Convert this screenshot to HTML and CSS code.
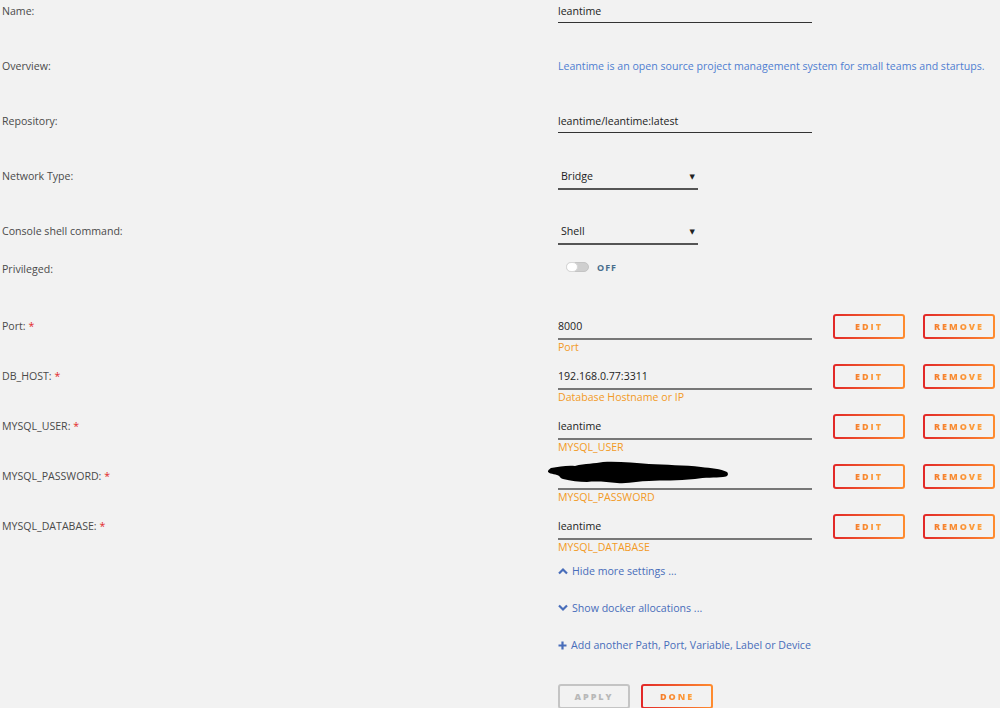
FILE: index.html
```html
<!DOCTYPE html>
<html lang="en">
<head>
    <meta charset="UTF-8">
    <meta name="viewport" content="width=device-width, initial-scale=1.0">
    <title>Update Container</title>
    <link rel="stylesheet" href="styles.css">
</head>
<body>
    <div class="form">
        <div class="row">
            <div class="label">Name:</div>
            <div class="value"><input class="text-input" type="text" value="leantime"></div>
        </div>
        <div class="row">
            <div class="label">Overview:</div>
            <div class="value overview">Leantime is an open source project management system for small teams and startups.</div>
        </div>
        <div class="row">
            <div class="label">Repository:</div>
            <div class="value"><input class="text-input" type="text" value="leantime/leantime:latest"></div>
        </div>
        <div class="row">
            <div class="label">Network Type:</div>
            <div class="value">
                <div class="select"><span>Bridge</span><span class="caret">&#9660;</span></div>
            </div>
        </div>
        <div class="row short">
            <div class="label">Console shell command:</div>
            <div class="value">
                <div class="select"><span>Shell</span><span class="caret">&#9660;</span></div>
            </div>
        </div>
        <div class="row tall">
            <div class="label">Privileged:</div>
            <div class="value switch-row">
                <span class="switch"><span class="knob"></span></span>
                <span class="switch-text">OFF</span>
            </div>
        </div>

        <div class="row config">
            <div class="label">Port: <span class="req">*</span></div>
            <div class="value config-value">
                <div class="config-field">
                    <input class="text-input config-input" type="text" value="8000">
                    <div class="desc">Port</div>
                </div>
                <button class="btn"><span>EDIT</span></button>
                <button class="btn"><span>REMOVE</span></button>
            </div>
        </div>
        <div class="row config">
            <div class="label">DB_HOST: <span class="req">*</span></div>
            <div class="value config-value">
                <div class="config-field">
                    <input class="text-input config-input" type="text" value="192.168.0.77:3311">
                    <div class="desc">Database Hostname or IP</div>
                </div>
                <button class="btn"><span>EDIT</span></button>
                <button class="btn"><span>REMOVE</span></button>
            </div>
        </div>
        <div class="row config">
            <div class="label">MYSQL_USER: <span class="req">*</span></div>
            <div class="value config-value">
                <div class="config-field">
                    <input class="text-input config-input" type="text" value="leantime">
                    <div class="desc">MYSQL_USER</div>
                </div>
                <button class="btn"><span>EDIT</span></button>
                <button class="btn"><span>REMOVE</span></button>
            </div>
        </div>
        <div class="row config">
            <div class="label">MYSQL_PASSWORD: <span class="req">*</span></div>
            <div class="value config-value">
                <div class="config-field redacted">
                    <input class="text-input config-input" type="text" value="">
                    <svg class="scribble" width="190" height="30" viewBox="0 0 190 30">
                        <path d="M6 9 C 14 8, 22 6, 30 7 C 40 4, 50 5, 58 3 C 72 2, 90 4, 104 5 C 120 6, 140 6, 156 8 C 166 9, 176 10, 182 13 C 184 15, 183 18, 178 18 C 170 19, 160 18, 150 20 C 132 22, 118 21, 104 22 C 94 22, 84 25, 72 24 C 62 23, 52 22, 42 23 C 34 23, 26 22, 18 20 C 14 19, 16 17, 12 16 C 8 15, 2 14, 3 12 C 4 10, 5 10, 6 9 Z" fill="#000"/>
                    </svg>
                    <div class="desc">MYSQL_PASSWORD</div>
                </div>
                <button class="btn"><span>EDIT</span></button>
                <button class="btn"><span>REMOVE</span></button>
            </div>
        </div>
        <div class="row config last">
            <div class="label">MYSQL_DATABASE: <span class="req">*</span></div>
            <div class="value config-value">
                <div class="config-field">
                    <input class="text-input config-input" type="text" value="leantime">
                    <div class="desc">MYSQL_DATABASE</div>
                </div>
                <button class="btn"><span>EDIT</span></button>
                <button class="btn"><span>REMOVE</span></button>
            </div>
        </div>

        <div class="links">
            <a class="link" href="#">
                <svg width="10" height="8" viewBox="0 0 10 8"><path d="M1 6.5 L5 2.5 L9 6.5" fill="none" stroke="#486dba" stroke-width="2.2"/></svg>
                Hide more settings ...
            </a>
            <a class="link" href="#">
                <svg width="10" height="8" viewBox="0 0 10 8"><path d="M1 1.5 L5 5.5 L9 1.5" fill="none" stroke="#486dba" stroke-width="2.2"/></svg>
                Show docker allocations ...
            </a>
            <a class="link" href="#">
                <svg width="9" height="9" viewBox="0 0 9 9"><path d="M4.5 0.5 V8.5 M0.5 4.5 H8.5" fill="none" stroke="#486dba" stroke-width="2.2"/></svg>
                Add another Path, Port, Variable, Label or Device
            </a>
        </div>

        <div class="actions">
            <button class="btn disabled"><span>APPLY</span></button>
            <button class="btn"><span>DONE</span></button>
        </div>
    </div>
</body>
</html>
```

FILE: styles.css
```css
* {
    box-sizing: border-box;
}

body {
    margin: 0;
    background-color: #f2f2f2;
    font-family: 'Open Sans', 'DejaVu Sans', sans-serif;
    font-size: 10.6px;
    color: #444;
    overflow: hidden;
}

.form {
    padding: 2px 0 0 2px;
}

.row {
    display: flex;
    height: 55px;
}

.row.short {
    height: 38px;
}

.row.tall {
    height: 57px;
}

.row.config {
    height: 50px;
}

.row.config.last {
    height: 46px;
}

.label {
    width: 556px;
    flex-shrink: 0;
    padding-top: 1px;
    line-height: 17px;
    color: #4a4a4a;
}

.req {
    color: #e22828;
}

.value {
    line-height: 17px;
}

.overview {
    padding-top: 1px;
    color: #4f7ed1;
    white-space: nowrap;
}

.text-input {
    display: block;
    width: 254px;
    margin: 0;
    padding: 1px 0 3px 0;
    border: none;
    border-bottom: 1px solid #333;
    background: transparent;
    font-family: inherit;
    font-size: 10.6px;
    line-height: 16px;
    height: 21px;
    color: #222;
    outline: none;
}

.select {
    display: flex;
    justify-content: space-between;
    align-items: center;
    width: 140px;
    padding: 1px 3px 3px 3px;
    border-bottom: 2px solid #555;
    color: #222;
}

.caret {
    font-size: 7px;
}

.switch-row {
    display: flex;
    align-items: center;
    gap: 8px;
    height: 14px;
    padding-left: 8px;
}

.switch {
    display: inline-block;
    width: 23px;
    height: 10px;
    border-radius: 5px;
    background-color: #cfcfcf;
    border: 1px solid #c4c4c4;
    position: relative;
}

.knob {
    position: absolute;
    left: -1px;
    top: -1px;
    width: 12px;
    height: 10px;
    border-radius: 5px;
    background-color: #fff;
    border: 1px solid #d8d8d8;
}

.switch-text {
    font-size: 9px;
    font-weight: bold;
    letter-spacing: 1px;
    color: #486d8c;
}

.config-value {
    display: flex;
    align-items: flex-start;
}

.config-field {
    width: 254px;
    position: relative;
}

.config-input {
    height: 23px;
    padding-bottom: 4px;
    border-bottom: 2px solid #777;
}

.desc {
    color: #f29a25;
    line-height: 15px;
}

.redacted .scribble {
    position: absolute;
    left: -13px;
    top: -8px;
}

.btn {
    width: 72px;
    height: 25px;
    margin-top: -3px;
    margin-left: 21px;
    padding: 0;
    border: 2px solid transparent;
    border-radius: 3px;
    background: linear-gradient(#f2f2f2, #f2f2f2) padding-box,
                linear-gradient(90deg, #e22828, #ff8c2f) border-box;
    font-family: inherit;
    font-size: 9px;
    font-weight: 800;
    letter-spacing: 2px;
    cursor: pointer;
}

.btn + .btn {
    margin-left: 18px;
}

.btn span {
    background: linear-gradient(90deg, #f57d2c, #ffa23c);
    -webkit-background-clip: text;
    background-clip: text;
    color: transparent;
}

.links {
    padding-left: 556px;
}

.link {
    display: flex;
    align-items: center;
    gap: 4px;
    height: 16px;
    margin-bottom: 21px;
    color: #486dba;
    text-decoration: none;
}

.actions {
    display: flex;
    padding-left: 556px;
    margin-top: 31px;
}

.actions .btn {
    margin: 0;
}

.actions .btn + .btn {
    margin-left: 11px;
}

.btn.disabled {
    background: #f2f2f2;
    border-color: #c4c4c4;
}

.btn.disabled span {
    background: none;
    color: #b8b8b8;
}
```
